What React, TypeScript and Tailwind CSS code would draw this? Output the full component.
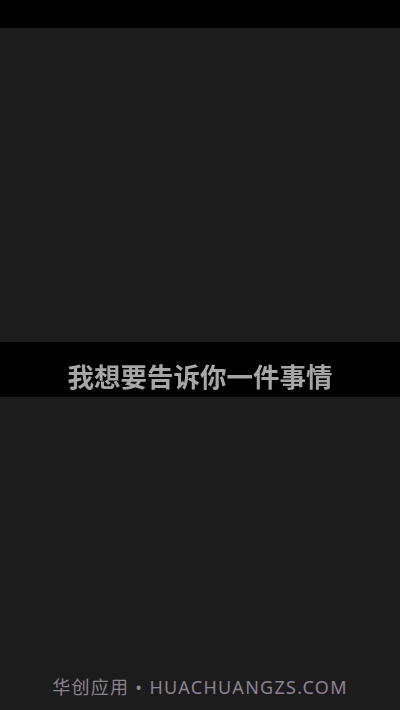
export default function App() {
  return (
    <div className="flex h-[710px] w-[400px] flex-col overflow-hidden bg-[#1c1c1c] font-['Noto_Sans','Noto_Sans_CJK_SC',sans-serif]">
      <div className="h-[28px] shrink-0 bg-black" />
      <div className="h-[314px] shrink-0" />
      <div className="flex h-[55px] shrink-0 items-center justify-center bg-black pt-[14px]">
        <span className="text-[26.5px] font-bold leading-none text-[#a6a6a6] blur-[0.6px] font-['Noto_Sans_CJK_SC',sans-serif]">
          我想要告诉你一件事情
        </span>
      </div>
      <div className="flex flex-1 items-end justify-center pb-[11px]">
        <span className="text-[18px] leading-[24px] tracking-[1.3px] text-[#8c8391]">华创应用 • HUACHUANGZS.COM</span>
      </div>
    </div>
  )
}
